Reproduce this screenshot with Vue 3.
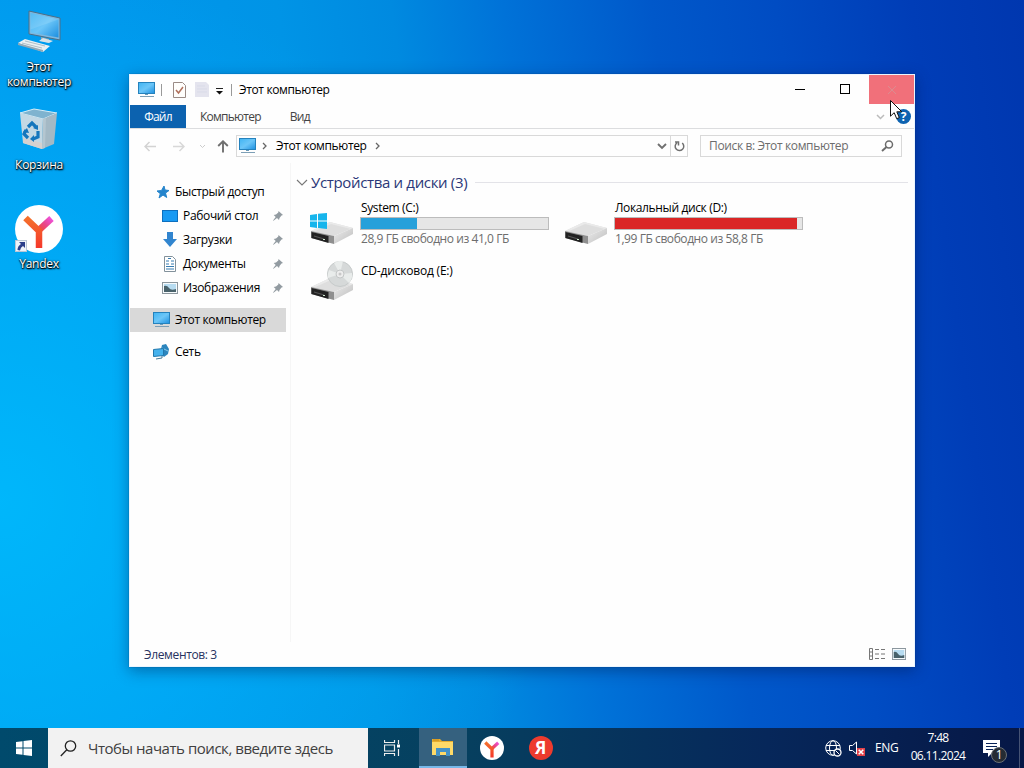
<template>
  <div class="desktop">
    <!-- shared icon shapes -->
    <svg class="sprite" aria-hidden="true">
      <defs>
        <linearGradient id="screen" x1="0" y1="0" x2="1" y2="1">
          <stop offset="0" stop-color="#3fb4f3" />
          <stop offset=".5" stop-color="#6cc6f8" />
          <stop offset="1" stop-color="#1c8fe0" />
        </linearGradient>
        <linearGradient id="metal" x1="0" y1="0" x2="1" y2="1">
          <stop offset="0" stop-color="#ececec" />
          <stop offset="1" stop-color="#bdbdbd" />
        </linearGradient>
        <linearGradient id="yred" x1="0" y1="1" x2="0" y2="0">
          <stop offset="0" stop-color="#f5372b" />
          <stop offset="1" stop-color="#f4702c" />
        </linearGradient>
        <linearGradient id="ypink" x1="0" y1="1" x2="1" y2="0">
          <stop offset="0" stop-color="#f54a35" />
          <stop offset=".5" stop-color="#e8478c" />
          <stop offset="1" stop-color="#ee52dc" />
        </linearGradient>
      </defs>
      <symbol id="pc" viewBox="0 0 17 16">
        <rect x=".5" y=".5" width="16" height="11" fill="url(#screen)" stroke="#2582bd" />
        <path d="M7 12h3v1H7z" fill="#6a9ab8" />
        <path d="M2 14.5h14" stroke="#7d9fb6" />
      </symbol>
      <symbol id="drive" viewBox="0 0 44 26">
        <path d="M1 12 20 3l23 6-19 8z" fill="#dedede" />
        <path d="m20 3 23 6-2 1L21 5 3 13l-2-1z" fill="#eaeaea" />
        <path d="m24 17 19-8v6l-19 10z" fill="url(#metal)" />
        <path d="m1 12 23 5v8L1 19z" fill="#8f8f8f" />
        <path d="m1.500 13 17 4v7l-17-5z" fill="#222" />
        <path d="m4 17 10 3" stroke="#555" stroke-width="1.200" />
        <path d="M13 20.500h2" stroke="#cfe8cf" />
      </symbol>
      <symbol id="ylogo" viewBox="0 0 48 48">
        <circle cx="24" cy="24" r="24" fill="#fff" />
        <path d="m24 25 12.500-11.500" stroke="url(#ypink)" stroke-width="6.500" fill="none" />
        <path d="M10.500 13 24 26v17" stroke="url(#yred)" stroke-width="6.500" fill="none" />
      </symbol>
      <symbol id="pin" viewBox="0 0 10 10">
        <path d="m5.500 0 4.500 4-1.500.5-2 2.500-.5 2-2-2L.5 9.700 0 9.500 2.700 6l-2-2 2.300-.5 2.300-2z" fill="#929ba1" />
      </symbol>
      <symbol id="picture" viewBox="0 0 16 12">
        <rect x=".5" y=".5" width="15" height="11" fill="#f6fafc" stroke="#8b969d" />
        <path d="M2 2h12v8H2z" fill="#b7dcf1" />
        <path d="M2 4q3-1 5 2t7 1v3H2z" fill="#49626b" />
      </symbol>
    </svg>

    <div class="shortcuts">
      <div class="shortcut first">
        <svg width="48" height="48" viewBox="0 0 48 48">
          <path d="m14 2 31 7v22l-31-6z" fill="#7db8df" stroke="#4e6f87" />
          <path d="m15.500 4 28 6.500v18l-28-5z" fill="url(#screen)" />
          <path d="m43.500 10.500-28 10V4z" fill="#fff" opacity=".12" />
          <path d="m26 28 8 2v4l-8-2z" fill="#91a7b4" />
          <path d="m24 32 10 2 4-2-10-3z" fill="#d9e3e9" />
          <path d="m3 34 7-4 25 7-7 6z" fill="#ebf0f3" />
          <path d="m3 34 25 7v2L3 36z" fill="#93a8b5" />
          <path d="m7 34 20 5m-17-7 20 5" stroke="#a0b2bd" stroke-width=".8" />
        </svg>
        <span>Этот<br>компьютер</span>
      </div>
      <div class="shortcut second">
        <svg width="48" height="48" viewBox="0 0 48 48">
          <path d="m5 6 14-4 23 4-14 6z" fill="#7fb3cf" stroke="#d8edf7" />
          <path d="m5 6 23 6-1 30-19-6z" fill="#c3d8e4" />
          <path d="m42 6-14 6-1 30 12-5z" fill="#a4b9c5" />
          <path d="m8 31 19 5v6L8 36z" fill="#d5d1cf" />
          <path d="m28 12 3-1-1 30-3 1z" fill="#b4c6d0" />
          <path d="m13 20 4-4 4 4m2 4 0 6-5 2m-5-1-4-4 2-4" fill="none" stroke="#1476bd" stroke-width="3.200" />
          <path d="m18 21 5 2v-5zm1 7v7l-4-3zm-11-3 4-4 2 5z" fill="#1476bd" />
        </svg>
        <span>Корзина</span>
      </div>
      <div class="shortcut third">
        <div class="badged">
          <svg width="48" height="48"><use href="#ylogo" /></svg>
          <svg class="link-badge" width="12" height="12" viewBox="0 0 12 12">
            <rect x=".5" y=".5" width="11" height="11" fill="#eef3fa" stroke="#b9c6d6" />
            <path d="M4 2h6v6L8 6Q5.500 7 5 10.500L2.500 10Q2.500 6 6 4z" fill="#2b3f8b" />
          </svg>
        </div>
        <span>Yandex</span>
      </div>
    </div>

    <div class="window">
      <header class="titlebar">
        <svg class="t-pc" width="17" height="16"><use href="#pc" /></svg>
        <i class="sep"></i>
        <svg class="t-check" width="13" height="16" viewBox="0 0 13 16">
          <path d="M.5.5h9l3 3v12H.5z" fill="#fffefc" stroke="#9a8b86" />
          <path d="m3 8 2.500 3L10 5" fill="none" stroke="#b0705c" stroke-width="1.500" />
        </svg>
        <svg class="t-new" width="14" height="16" viewBox="0 0 14 16">
          <path d="M0 0h11l3 3v12H0z" fill="#e4e4ee" /><path d="M2 4h8M2 7h10M2 10h10" stroke="#d9dbe8" />
        </svg>
        <svg class="t-menu" width="9" height="9" viewBox="0 0 9 9"><path d="M1 2.500h7" stroke="#222" /><path d="M1 5h7L4.500 8.500z" fill="#111" /></svg>
        <i class="sep"></i>
        <span class="title">Этот компьютер</span>
        <div class="controls">
          <div><svg width="10" height="10"><path d="M0 5.500h10" stroke="#000" /></svg></div>
          <div><svg width="10" height="10"><rect x=".5" y=".5" width="9" height="9" fill="none" stroke="#000" /></svg></div>
          <div class="close"><svg width="10" height="10"><path d="m1 1 8 8m0-8-8 8" stroke="#db8c90" /></svg></div>
        </div>
      </header>

      <nav class="tabs">
        <span class="file">Файл</span>
        <span class="tab">Компьютер</span>
        <span class="tab view">Вид</span>
        <svg class="expand" width="9" height="6"><path d="m1 1 3.500 3.500L8 1" fill="none" stroke="#bbb" stroke-width="1.500" /></svg>
        <span class="help">?</span>
      </nav>

      <div class="navrow">
        <svg class="back" width="12" height="11" viewBox="0 0 12 11"><path d="M12 5.500H1m4.500-4.500L1 5.500 5.500 10" fill="none" stroke="#d3d3d3" stroke-width="1.500" /></svg>
        <svg class="fwd" width="12" height="11" viewBox="0 0 12 11"><path d="M0 5.500h11M6.500 1 11 5.500 6.500 10" fill="none" stroke="#d8d8d8" stroke-width="1.500" /></svg>
        <svg class="recent" width="7" height="5"><path d="m1 1 2.500 2.500L6 1" fill="none" stroke="#ccc" /></svg>
        <svg class="up" width="12" height="13" viewBox="0 0 12 13"><path d="M6 12.500V1.500M1.200 6 6 1.300 10.800 6" fill="none" stroke="#707070" stroke-width="1.900" /></svg>
        <div class="address">
          <svg width="17" height="16"><use href="#pc" /></svg>
          <svg class="chev1" width="5" height="8"><path d="m1 1 3 3-3 3" fill="none" stroke="#666" stroke-width="1.300" /></svg>
          <span class="crumb">Этот компьютер</span>
          <svg class="chev2" width="5" height="8"><path d="m1 1 3 3-3 3" fill="none" stroke="#666" stroke-width="1.300" /></svg>
          <svg class="drop" width="10" height="7"><path d="m1 1 4 4 4-4" fill="none" stroke="#707070" stroke-width="1.900" /></svg>
          <div class="refresh">
            <svg width="11" height="12" viewBox="0 0 11 12"><path d="M8.200 3A4.300 4.300 0 1 1 3 2.800M1 2h3.500v3.500" fill="none" stroke="#707070" stroke-width="1.500" /></svg>
          </div>
        </div>
        <div class="search">
          <span>Поиск в: Этот компьютер</span>
          <svg width="13" height="12" viewBox="0 0 13 12"><circle cx="8" cy="4.500" r="3.500" fill="none" stroke="#6c6c6c" stroke-width="1.500" /><path d="M5.500 7 1 11" stroke="#6c6c6c" stroke-width="1.900" /></svg>
        </div>
      </div>

      <div class="body">
        <aside>
          <div class="side-item">
            <svg width="14" height="14" viewBox="0 0 14 14"><path d="m8 1 1 4 4 .5L9.500 8l1.200 4.500L7 10l-4 3 1.300-4.300L1 6l4.500-.5z" fill="#2484cc" stroke="#2484cc" /></svg>
            <span>Быстрый доступ</span>
          </div>
          <div v-for="item in pinned" :key="item.icon" class="side-item nested">
            <svg v-if="item.icon === 'desktop'" width="16" height="14"><rect x=".5" y="1.500" width="15" height="11" fill="#189af3" stroke="#0d6fbe" /></svg>
            <svg v-else-if="item.icon === 'down'" width="16" height="16"><path d="M5 0h6v7h4l-7 8-7-8h4z" fill="#3185cf" /></svg>
            <svg v-else-if="item.icon === 'doc'" width="16" height="16" viewBox="0 0 16 16">
              <path d="M2.500.5h8l3 3v12h-11z" fill="#fff" stroke="#82919b" /><path d="M4 5h3M9 5h3M4 8h3m2 0h3M4 10.500h8M4 13h8M6 2.500h3" stroke="#377db2" stroke-width="1.200" />
            </svg>
            <svg v-else width="16" height="12"><use href="#picture" /></svg>
            <span>{{ item.label }}</span>
            <svg class="pin" width="10" height="10"><use href="#pin" /></svg>
          </div>
          <div class="side-item root selected">
            <svg width="17" height="16"><use href="#pc" /></svg>
            <span>Этот компьютер</span>
          </div>
          <div class="side-item root">
            <svg width="17" height="16" viewBox="0 0 17 16">
              <path d="m9 1 4-1 3 5-1 5-4 3-4-4z" fill="#2c85bd" /><path d="m9 4 6 3" stroke="#8bcaea" fill="none" />
              <path d="m.5 5.500 10-1v7l-10 1z" fill="#45b2ed" stroke="#2178ad" /><path d="m3 15 6-1v-2" stroke="#477b98" fill="none" />
            </svg>
            <span>Сеть</span>
          </div>
        </aside>

        <main>
          <div class="group">
            <svg width="12" height="7"><path d="m1 1 5 5 5-5" fill="none" stroke="#777" stroke-width="1.100" /></svg>
            <h2>Устройства и диски (3)</h2>
            <hr>
          </div>
          <div class="drives">
            <div v-for="d in drives" :key="d.name" class="drive" :class="d.kind">
              <div class="drive-icon">
                <svg width="44" height="26"><use href="#drive" /></svg>
                <svg v-if="d.kind === 'system'" class="win-mark" width="17" height="16" viewBox="0 0 17 16"><path d="m0 2 7-1v6.500H0zm8-1.200L17 0v7.500H8zM0 8.500h7V15l-7-1zm8 0h9V16l-9-1z" fill="#16b5ec" /></svg>
                <svg v-if="d.kind === 'cd'" class="disc" width="28" height="28" viewBox="0 0 28 28">
                  <circle cx="14" cy="14" r="12.500" fill="#d6d9d9" stroke="#c6caca" />
                  <path d="M14 14 8 3q5-3 9-2zm0 0 9 9q4-5 3-10zm0 0L2 18q-1-4 1-8z" fill="#e9eceb" />
                  <circle cx="14" cy="14" r="4" fill="#ededed" stroke="#c3c6c6" /><circle cx="14" cy="14" r="1.500" fill="#c8c8c8" />
                </svg>
              </div>
              <div class="drive-info">
                <div class="drive-name">{{ d.name }}</div>
                <template v-if="d.free">
                  <div class="meter"><div class="fill" :class="{ full: d.used > 90 }" :style="{ width: `${d.used}%` }"></div></div>
                  <div class="free">{{ d.free }}</div>
                </template>
              </div>
            </div>
          </div>
        </main>
      </div>

      <footer class="status">
        <span>Элементов: 3</span>
        <svg width="17" height="12" viewBox="0 0 17 12"><path d="M.5.5h3v11h-3zM.5 4h3m-3 4h3M6 1.500h4m2 0h4M6 6h4m2 0h4m-10 4.500h4m2 0h4" fill="none" stroke="#777" /></svg>
        <svg class="large" width="14" height="12" viewBox="0 0 16 12" preserveAspectRatio="none"><use href="#picture" /></svg>
      </footer>
    </div>

    <svg class="cursor" width="14" height="20" viewBox="0 0 14 20"><path d="M.5.500v15.700l3.700-3.500 2.500 6 2.600-1.100-2.500-5.800h5z" fill="#fff" stroke="#111" /></svg>

    <footer class="taskbar">
      <div class="start">
        <svg width="16" height="16" viewBox="0 0 16 16"><path d="m0 2 6.500-.8v6.300H0zM7.500 1 16 0v7.500H7.500zM0 8.500h6.500v6.300L0 14zm7.500 0H16V16l-8.500-1z" fill="#fff" /></svg>
      </div>
      <div class="task-search">
        <svg width="17" height="17" viewBox="0 0 17 17"><circle cx="10.500" cy="6" r="5.200" fill="none" stroke="#222" stroke-width="1.300" /><path d="M6.800 9.800.8 16" stroke="#222" stroke-width="1.300" /></svg>
        <span>Чтобы начать поиск, введите здесь</span>
      </div>
      <div class="task view-btn">
        <svg width="17" height="16" viewBox="0 0 17 16"><path d="M.5 0v2.500h10V0M.5 5h10v6H.500zM.5 16v-2.500h10V16M14.500 0v4m0 5v7" fill="none" stroke="#eee" stroke-width="1.200" /><path d="M13 4.500h3v3h-3z" fill="#fff" /></svg>
      </div>
      <div class="task active">
        <svg width="22" height="18" viewBox="0 0 22 18"><path d="M0 1h8l2 2h11v14H0z" fill="#e7ad2e" /><path d="M0 4h21v13H0z" fill="#ffda68" /><path d="M4 10h14v8h-4v-4H8v4H4z" fill="#4492c7" /><path d="M1 2h6" stroke="#c88d18" /></svg>
      </div>
      <div class="task"><svg width="24" height="24"><use href="#ylogo" /></svg></div>
      <div class="task"><span class="ya">Я</span></div>
      <div class="tray">
        <svg width="17" height="17" viewBox="0 0 17 17"><g fill="none" stroke="#fff"><circle cx="8" cy="8" r="7.300" /><path d="M1 5.500h14M1 10.500h14" /><ellipse cx="8" cy="8" rx="3.500" ry="7.300" /></g><circle cx="12.500" cy="12.500" r="3.500" fill="#061d4d" stroke="#fff" stroke-width="1.300" /><path d="m10.500 10.500 4 4" stroke="#fff" /></svg>
        <svg class="sound" width="16" height="16" viewBox="0 0 16 16"><path d="M.5 5.500h3L7.500 2v12l-4-3.500h-3z" fill="none" stroke="#fff" /><path d="M8 8h8v8H8z" fill="#e04048" /><path d="m9.700 9.700 4.600 4.600m0-4.600-4.600 4.600" stroke="#fff" stroke-width="1.500" /></svg>
        <span class="lang">ENG</span>
        <div class="clock"><span>7:48</span><span>06.11.2024</span></div>
        <div class="notes">
          <svg width="17" height="17" viewBox="0 0 17 17"><path d="M0 0h17v13H9l-4 4v-4H0z" fill="#fff" /><path d="M3 3.500h11M3 6.500h11M3 9.500h7" stroke="#0a2357" /></svg>
          <span>1</span>
        </div>
      </div>
    </footer>
  </div>
</template>

<script setup>
const pinned = [
  { icon: 'desktop', label: 'Рабочий стол' },
  { icon: 'down', label: 'Загрузки' },
  { icon: 'doc', label: 'Документы' },
  { icon: 'image', label: 'Изображения' }
];

const drives = [
  { kind: 'system', name: 'System (C:)', used: 30, free: '28,9 ГБ свободно из 41,0 ГБ' },
  { kind: 'local', name: 'Локальный диск (D:)', used: 97.5, free: '1,99 ГБ свободно из 58,8 ГБ' },
  { kind: 'cd', name: 'CD-дисковод (E:)' }
];
</script>

<style>
body {
  overflow: hidden;
}
</style>

<style scoped>
.desktop {
  position: relative;
  width: 1024px;
  height: 768px;
  overflow: hidden;
  display: flex;
  flex-direction: column;
  justify-content: space-between;
  font-family: "Open Sans", "Noto Sans", sans-serif;
  font-size: 12px;
  line-height: 16px;
  letter-spacing: -0.36px;
  white-space: nowrap;
  background:
    radial-gradient(ellipse 560px 540px at 0 500px, rgba(0, 192, 255, 0.75), transparent),
    linear-gradient(82deg, #009cee 0%, #0098ee 15%, #0094e6 34%, #008ae0 44%, #0072d8 54%, #0058ca 67%, #004cc3 78%, #003db7 90%, #0037af 100%);
}
svg {
  flex: none;
  display: block;
}
.sprite {
  position: absolute;
  width: 0;
  height: 0;
}
.shortcuts {
  width: 78px;
  padding-top: 9px;
}
.shortcut {
  display: flex;
  flex-direction: column;
  align-items: center;
  color: #fff;
  text-align: center;
  line-height: 15px;
  letter-spacing: -0.25px;
  text-shadow: 0 1px 1px #000, 1px 1px 2px #000, 0 0 2px #123;
}
.first { height: 98px; }
.second { height: 98px; }
.first svg { margin-bottom: 2px; }
.second svg { margin-bottom: 2px; }
.badged {
  position: relative;
  margin-bottom: 3px;
}
.link-badge {
  position: absolute;
  left: 0;
  bottom: 1px;
}
.window {
  position: absolute;
  left: 129px;
  top: 74px;
  width: 786px;
  height: 593px;
  box-sizing: border-box;
  border: 1px solid #eaf5ff;
  background: #fefefe;
  box-shadow: 0 0 1px rgba(0, 40, 90, 0.6), 0 4px 14px rgba(0, 20, 70, 0.4);
  display: flex;
  flex-direction: column;
}
.titlebar {
  height: 30px;
  display: flex;
  align-items: center;
  padding-left: 8px;
}
.sep {
  width: 1px;
  height: 12px;
  background: #999;
}
.t-pc { margin-right: 6px; }
.t-check { margin: 0 9px 0 11px; }
.t-new { margin-right: 6px; }
.t-menu { margin-right: 7px; }
.title {
  margin-left: 7px;
}
.controls {
  margin-left: auto;
  display: flex;
  align-self: stretch;
}
.controls div {
  width: 45px;
  height: 29px;
  display: flex;
  align-items: center;
  justify-content: center;
}
.controls div:not(.close) svg {
  margin: 0 3px 2px 0;
}
.controls .close {
  background: #f1707a;
}
.tabs {
  display: flex;
  align-items: center;
  height: 23px;
  border-bottom: 1px solid #dcdddf;
  color: #444;
}
.file {
  width: 56px;
  line-height: 23px;
  text-align: center;
  color: #fff;
  background: #0c62af;
}
.file, .tab {
  letter-spacing: -0.75px;
}
.tab {
  margin-left: 14px;
}
.view {
  margin-left: 29px;
}
.expand {
  margin-left: auto;
  margin-right: 11px;
}
.help {
  width: 15px;
  height: 15px;
  border-radius: 50%;
  background: #0d63b1;
  color: #fff;
  font-weight: 700;
  line-height: 15px;
  text-align: center;
  margin-right: 3px;
}
.navrow {
  height: 34px;
  display: flex;
  align-items: center;
}
.back { margin-left: 14px; }
.fwd { margin-left: 17px; }
.recent { margin-left: 14px; }
.up { margin-left: 11px; }
.address {
  display: flex;
  align-items: center;
  width: 452px;
  box-sizing: border-box;
  height: 22px;
  border: 1px solid #d9d9d9;
  margin-left: 7px;
  padding-left: 2px;
}
.chev1 { margin: 0 9px 0 6px; }
.chev2 { margin-left: 8px; }
.drop { margin-left: auto; margin-right: 3px; }
.refresh {
  width: 16px;
  align-self: stretch;
  border-left: 1px solid #d9d9d9;
  display: flex;
  align-items: center;
  justify-content: center;
}
.search {
  display: flex;
  align-items: center;
  justify-content: space-between;
  width: 202px;
  height: 22px;
  box-sizing: border-box;
  border: 1px solid #d9d9d9;
  padding: 0 7px 0 8px;
  margin-left: 12px;
  color: #6d6d6d;
}
.body {
  flex: 1;
  display: flex;
}
aside {
  width: 161px;
  box-sizing: border-box;
  padding-top: 17px;
  border-right: 1px solid #f6f6f6;
  letter-spacing: -0.34px;
}
.side-item {
  display: flex;
  align-items: center;
  height: 24px;
  width: 156px;
  box-sizing: border-box;
  padding-left: 26px;
  gap: 5px;
}
.nested {
  padding-left: 32px;
}
.pin {
  margin-left: auto;
  margin-right: 3px;
}
.root {
  margin-top: 8px;
  padding-left: 23px;
}
.selected {
  background: #d9d9d9;
}
main {
  flex: 1;
  padding: 9px 6px 0 5px;
}
.group {
  display: flex;
  align-items: center;
  height: 20px;
}
h2 {
  margin: 0 8px 0 3px;
  font-size: 15px;
  font-weight: 400;
  line-height: 20px;
  letter-spacing: -0.34px;
  color: #2b3878;
}
hr {
  flex: 1;
  border: 0;
  border-top: 1px solid #e3e3e8;
  margin: 0;
}
.drives {
  display: grid;
  grid-template-columns: 254px 254px;
  grid-template-rows: 63px 63px;
  padding: 8px 0 0 14px;
}
.drive {
  display: flex;
}
.drive-icon {
  position: relative;
  width: 44px;
  padding-top: 19px;
  margin-right: 7px;
}
.cd .drive-icon {
  padding-top: 12px;
}
.cd .drive-name {
  letter-spacing: -0.2px;
}
.win-mark {
  position: absolute;
  left: 0;
  top: 13px;
}
.disc {
  position: absolute;
  left: 16px;
  top: -3px;
}
.meter {
  width: 189px;
  height: 13px;
  box-sizing: border-box;
  border: 1px solid #bcbcbc;
  background: #e6e6e6;
  margin: 1px 0 0 -1px;
}
.fill {
  height: 100%;
  background: #26a0da;
}
.full {
  background: #da2626;
}
.free {
  color: #6d6d6d;
  letter-spacing: -0.43px;
  margin-top: 1px;
}
.status {
  height: 24px;
  display: flex;
  align-items: center;
  padding: 1px 8px 0 14px;
  box-sizing: border-box;
  color: #26325f;
}
.status span {
  margin-right: auto;
}
.status svg {
  margin-bottom: 2px;
}
.large {
  margin-left: 6px;
}
.cursor {
  position: absolute;
  left: 890px;
  top: 100px;
}
.taskbar {
  height: 40px;
  display: flex;
  background: linear-gradient(90deg, #004a6c 0%, #06405f 45%, #06275a 75%, #061746 100%);
}
.start, .task {
  width: 48px;
  display: flex;
  align-items: center;
  justify-content: center;
}
.task {
  width: 49px;
}
.view-btn {
  width: 51px;
}
.view-btn svg {
  margin-right: 2px;
}
.active {
  width: 48px;
  box-sizing: border-box;
  background: #35617f;
  border-bottom: 2px solid #78b8e9;
}
.task-search {
  width: 320px;
  box-sizing: border-box;
  background: #f2f2f2;
  display: flex;
  align-items: center;
  gap: 11px;
  padding-left: 12px;
  font-size: 15px;
  letter-spacing: -0.46px;
  color: #404040;
}
.ya {
  width: 24px;
  height: 24px;
  border-radius: 50%;
  background: #ed3b2e;
  color: #fff;
  font-size: 17px;
  font-weight: 700;
  line-height: 23px;
  text-align: center;
}
.tray {
  margin-left: auto;
  display: flex;
  align-items: center;
  color: #fff;
}
.sound { margin: 0 10px 0 7px; }
.lang { width: 25px; }
.clock {
  width: 56px;
  margin: 0 17px 0 10px;
  display: flex;
  flex-direction: column;
  align-items: center;
  line-height: 18px;
  letter-spacing: -0.65px;
  padding-bottom: 2px;
}
.notes {
  position: relative;
  width: 36px;
  border-right: 1px solid #465374;
  align-self: stretch;
  display: flex;
  align-items: center;
  margin-right: 4px;
}
.notes span {
  position: absolute;
  left: 8px;
  top: 19px;
  width: 14px;
  height: 14px;
  border: 1px solid #6b7075;
  border-radius: 50%;
  background: #252b33;
  text-align: center;
  line-height: 14px;
}
</style>
